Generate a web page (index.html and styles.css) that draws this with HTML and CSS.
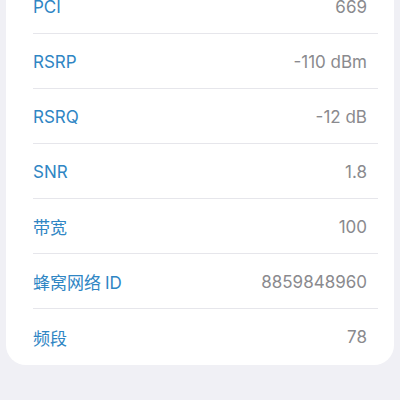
FILE: index.html
```html
<!DOCTYPE html>
<html lang="zh-CN">
<head>
    <meta charset="UTF-8">
    <title>小区信息</title>
    <link rel="stylesheet" href="styles.css">
</head>
<body>
    <div class="card">
        <div class="row"><span class="label">PCI</span><span class="value">669</span></div>
        <div class="row"><span class="label">RSRP</span><span class="value">-110 dBm</span></div>
        <div class="row"><span class="label">RSRQ</span><span class="value">-12 dB</span></div>
        <div class="row"><span class="label">SNR</span><span class="value">1.8</span></div>
        <div class="row"><span class="label">带宽</span><span class="value">100</span></div>
        <div class="row"><span class="label">蜂窝网络<span class="latin">ID</span></span><span class="value">8859848960</span></div>
        <div class="row"><span class="label">频段</span><span class="value">78</span></div>
    </div>
</body>
</html>
```

FILE: styles.css
```css
body {
    margin: 0;
    background: #f0f0f5;
    font-family: Inter, "Noto Sans CJK SC", sans-serif;
    font-size: 17px;
}
.card {
    background: white;
    margin: -21px 6px 0;
    padding: 0 16px 1px 27px;
    border-radius: 0 0 20px 20px;
}
.row {
    display: flex;
    justify-content: space-between;
    align-items: center;
    height: 54px;
    padding-top: 1px;
    box-sizing: border-box;
    height: 55px;
    border-bottom: 1px solid #e6e6eb;
}
.row:last-child {
    border-bottom: none;
}
.label {
    color: #2f86c4;
}
.latin {
    margin-left: 4px;
}
.value {
    color: #8a8a8e;
    padding-right: 11px;
}
```
